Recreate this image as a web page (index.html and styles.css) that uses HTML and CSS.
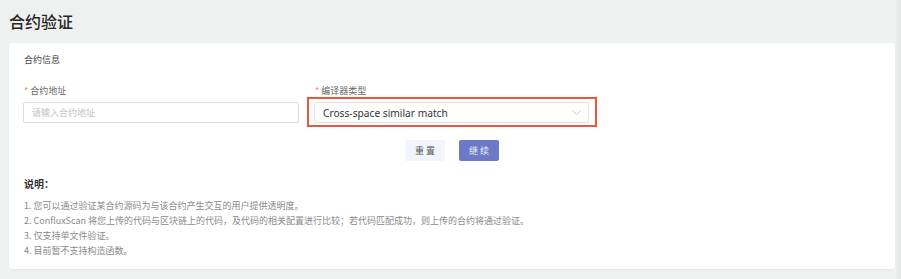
FILE: index.html
```html
<!DOCTYPE html>
<html lang="zh">

<head>
    <meta charset="UTF-8">
    <meta name="viewport" content="width=device-width, initial-scale=1.0">
    <title>合约验证</title>

    <link rel="stylesheet" href="styles.css">

</head>

<body>
    <div class="page">
        <h1 class="page-title">合约验证</h1>

        <div class="card">
            <div class="card-title">合约信息</div>

            <div class="form-row">
                <div class="field field-address">
                    <label class="field-label"><span class="req">*</span> 合约地址</label>
                    <input type="text" class="text-input" placeholder="请输入合约地址">
                </div>
                <div class="field field-compiler">
                    <label class="field-label"><span class="req">*</span> 编译器类型</label>
                    <div class="highlight">
                        <div class="select">
                            <span>Cross-space similar match</span>
                            <svg class="chevron" width="9" height="5" viewBox="0 0 9 5">
                                <path d="M0.5 0.5 L4.5 4.5 L8.5 0.5" fill="none" stroke="#c4c4c4" stroke-width="1"/>
                            </svg>
                        </div>
                    </div>
                </div>
            </div>

            <div class="actions">
                <button type="button" class="btn btn-reset">重 置</button>
                <button type="button" class="btn btn-primary">继 续</button>
            </div>

            <div class="notes">
                <div class="notes-title">说明：</div>
                <ol class="notes-list">
                    <li>1. 您可以通过验证某合约源码为与该合约产生交互的用户提供透明度。</li>
                    <li>2. ConfluxScan 将您上传的代码与区块链上的代码，及代码的相关配置进行比较；若代码匹配成功，则上传的合约将通过验证。</li>
                    <li>3. 仅支持单文件验证。</li>
                    <li>4. 目前暂不支持构造函数。</li>
                </ol>
            </div>
        </div>
    </div>
</body>

</html>
```

FILE: styles.css
```css
* {
    box-sizing: border-box;
}

body {
    margin: 0;
    background: #eff0f0;
    font-family: "Noto Sans CJK SC", "Noto Sans", sans-serif;
    color: #333;
}

.page {
    padding: 0 6px 0 9px;
    min-height: 279px;
    background: linear-gradient(to right, #eff0f0 896px, #e8eaea 897px);
}

.page-title {
    margin: 0;
    padding-top: 10px;
    height: 43px;
    font-size: 16px;
    font-weight: 500;
    line-height: 23px;
    color: #262626;
}

.card {
    background: #fff;
    border-radius: 3px;
    padding: 10px 15px 0 15px;
    height: 226px;
    box-shadow: 0 1px 2px rgba(0, 0, 0, 0.04);
}

.card-title {
    font-size: 9px;
    line-height: 13px;
    color: #444;
}

.form-row {
    display: flex;
    margin-top: 18px;
}

.field-label {
    display: block;
    padding-left: 1px;
    font-size: 9px;
    line-height: 13px;
    color: #666;
}

.req {
    color: #f0826f;
}

.field-address {
    margin-left: -1px;
    width: 276px;
}

.field-address .field-label {
    margin-bottom: 5px;
}

.text-input {
    display: block;
    width: 276px;
    height: 21px;
    border: 1px solid #dedede;
    border-radius: 2px;
    padding: 0 8px;
    font-family: inherit;
    font-size: 9px;
    color: #333;
    outline: none;
}

.text-input::placeholder {
    color: #c2c2c2;
}

.field-compiler {
    margin-left: 8px;
}

.field-compiler .field-label {
    padding-left: 8px;
}

.highlight {
    width: 290px;
    height: 30px;
    border: 2px solid #ea5640;
    padding: 3px 6px 2px 5px;
}

.select {
    display: flex;
    align-items: center;
    justify-content: space-between;
    height: 21px;
    border: 1px solid #e3e3e3;
    border-radius: 2px;
    padding: 0 7px 0 8px;
    font-family: "Noto Sans", sans-serif;
    font-size: 10.2px;
    color: #333;
}

.actions {
    display: flex;
    justify-content: center;
    gap: 14px;
    margin-top: 13px;
}

.btn {
    width: 40px;
    height: 21px;
    border: none;
    border-radius: 2px;
    font-family: inherit;
    font-size: 9px;
    padding: 0;
}

.btn-reset {
    background: #f3f5fc;
    color: #555;
}

.btn-primary {
    background: #6d79c6;
    color: #eef0fb;
}

.notes {
    margin-top: 16px;
}

.notes-title {
    font-size: 10px;
    font-weight: 700;
    line-height: 14px;
    color: #333;
}

.notes-list {
    list-style: none;
    margin: 7px 0 0 0;
    padding: 0;
    font-size: 9px;
    line-height: 15px;
    color: #8a8a8a;
}
```
